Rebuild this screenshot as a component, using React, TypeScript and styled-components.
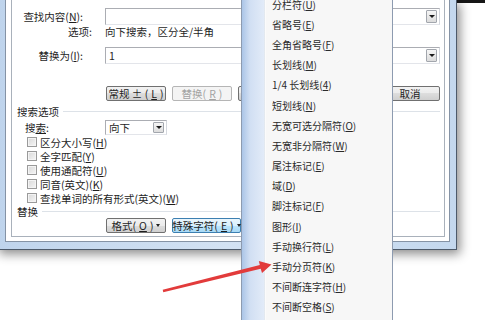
import styled, { createGlobalStyle } from 'styled-components'

const GlobalStyle = createGlobalStyle`
  html, body {
    margin: 0;
    padding: 0;
    background: #fff;
  }
  body {
    font-family: 'Noto Sans CJK SC', 'Noto Sans', sans-serif;
    color: #1e1e1e;
  }
`

const Stage = styled.div`
  position: relative;
  width: 496px;
  height: 320px;
  overflow: hidden;
  background: #fff;
`

const TopStrip = styled.div`
  position: absolute;
  left: 455px;
  top: 0;
  width: 30px;
  height: 3px;
  background: #161616;
`

// dialog window, frame only partly visible
const Window = styled.div`
  position: absolute;
  left: -4px;
  top: 0;
  width: 461px;
  height: 250px;
  box-sizing: border-box;
  display: flex;
  padding: 0 8px 7px;
  border: 1px solid #4d5a6a;
  border-top: none;
  background: linear-gradient(90deg, #bfd4ec, #d3e2f3 50%, #c4d8ee);
  box-shadow: 3px 4px 10px rgba(0, 0, 0, 0.45);
`

const Client = styled.div`
  flex: 1;
  display: flex;
  padding: 0 4px 4px 5px;
  border: 1px solid #8593a5;
  border-top: none;
  background: #fff;
`

const TabPage = styled.div`
  flex: 1;
  display: flex;
  flex-direction: column;
  padding: 0 4px 0 0;
  border: 1px solid #a9b1bb;
  border-top: none;
  font-size: 10.5px;
  line-height: 13px;
`

const FieldRow = styled.div<{ $top: number; $h: number }>`
  display: flex;
  align-items: center;
  height: ${(p) => p.$h}px;
  margin-top: ${(p) => p.$top}px;
`

const Label = styled.div<{ $end: number }>`
  width: ${(p) => p.$end}px;
  flex: none;
  text-align: right;
  white-space: nowrap;
  margin-right: ${(p) => 93 - p.$end}px;
`

const Combo = styled.div<{ $w?: number }>`
  position: relative;
  box-sizing: border-box;
  height: 100%;
  width: ${(p) => (p.$w ? `${p.$w}px` : 'auto')};
  flex: ${(p) => (p.$w ? 'none' : '1')};
  display: flex;
  align-items: center;
  padding-left: 3px;
  border: 1px solid #abadb3;
  border-right-color: #d5d8de;
  border-bottom-color: #e3e5ea;
  background: #fff;
`

const DropBtn = styled.div`
  position: absolute;
  right: 2px;
  top: 1px;
  bottom: 1px;
  width: 11px;
  box-sizing: border-box;
  border: 1px solid #a2a6ad;
  border-radius: 1px;
  background: linear-gradient(#f6f6f6, #dcdcdc);
  display: flex;
  align-items: center;
  justify-content: center;
  &::after {
    content: '';
    border-left: 3px solid transparent;
    border-right: 3px solid transparent;
    border-top: 3px solid #1a1a1a;
  }
`

const ButtonRow = styled.div<{ $top: number }>`
  display: flex;
  gap: 6px;
  height: 15px;
  margin-top: ${(p) => p.$top}px;
  padding-left: 94px;
`

const Btn = styled.div<{ $w?: number; $state?: 'off' | 'hot'; $push?: boolean }>`
  box-sizing: border-box;
  width: ${(p) => p.$w ?? 60}px;
  height: 15px;
  display: flex;
  align-items: center;
  justify-content: center;
  gap: 3px;
  margin-left: ${(p) => (p.$push ? 'auto' : '0')};
  border: 1px solid ${(p) => (p.$state === 'hot' ? '#3c7fb1' : p.$state === 'off' ? '#b5b5b5' : '#707070')};
  border-radius: 2px;
  white-space: nowrap;
  color: ${(p) => (p.$state === 'off' ? '#a3a3a3' : '#1e1e1e')};
  background: ${(p) =>
    p.$state === 'hot'
      ? 'linear-gradient(#eaf6fd 0, #d9f0fc 50%, #bee6fd 50%, #a7d9f5 100%)'
      : p.$state === 'off'
        ? '#f4f4f4'
        : 'linear-gradient(#f2f2f2 0, #ebebeb 50%, #dddddd 50%, #cfcfcf 100%)'};
`

const Caret = styled.span`
  border-left: 2.5px solid transparent;
  border-right: 2.5px solid transparent;
  border-top: 3px solid #222;
`

const GroupHead = styled.div<{ $top: number }>`
  display: flex;
  align-items: center;
  height: 13px;
  margin-top: ${(p) => p.$top}px;
  padding-left: 5px;
  &::after {
    content: '';
    flex: 1;
    margin-left: 4px;
    border-top: 1px solid #dde2e8;
  }
`

const CheckRow = styled.label`
  display: flex;
  align-items: center;
  gap: 3px;
  height: 14px;
  padding-left: 15px;
  white-space: nowrap;
`

const Box = styled.span`
  width: 10px;
  height: 10px;
  box-sizing: border-box;
  border: 1px solid #9a9a9a;
  background: linear-gradient(135deg, #d8d8d8, #f6f6f6);
  box-shadow: inset 0 0 0 1px #f4f4f4;
`

const SearchLabel = styled.div`
  width: 80px;
  padding-left: 13px;
  box-sizing: border-box;
  flex: none;
  margin-right: 13px;
`

// popup menu
const Menu = styled.div`
  position: absolute;
  left: 241px;
  top: -7px;
  width: 152px;
  height: 340px;
  box-sizing: border-box;
  border: 1px solid #8d9bb0;
  background: linear-gradient(
    90deg,
    #abc5e7 0,
    #d1dff3 8px,
    #e2ebf8 22px,
    #c6d2e0 22px,
    #ffffff 23px,
    #f7f7f7 24px
  );
  font-size: 10px;
  color: #2a2a2a;
`

const Item = styled.div`
  height: 20.2px;
  display: flex;
  align-items: center;
  padding-left: 30px;
  white-space: nowrap;
`

const Arrow = styled.svg`
  position: absolute;
  left: 0;
  top: 0;
`

const items: [string, string][] = [
  ['分栏符', 'U'],
  ['省略号', 'E'],
  ['全角省略号', 'F'],
  ['长划线', 'M'],
  ['1/4 长划线', '4'],
  ['短划线', 'N'],
  ['无宽可选分隔符', 'O'],
  ['无宽非分隔符', 'W'],
  ['尾注标记', 'E'],
  ['域', 'D'],
  ['脚注标记', 'F'],
  ['图形', 'I'],
  ['手动换行符', 'L'],
  ['手动分页符', 'K'],
  ['不间断连字符', 'H'],
  ['不间断空格', 'S'],
]

const checks: [string, string][] = [
  ['区分大小写', 'H'],
  ['全字匹配', 'Y'],
  ['使用通配符', 'U'],
  ['同音(英文)', 'K'],
  ['查找单词的所有形式(英文)', 'W'],
]

export default function App() {
  return (
    <Stage>
      <GlobalStyle />
      <TopStrip />
      <Window>
        <Client>
          <TabPage>
            <FieldRow $top={8} $h={17}>
              <Label $end={71}>
                查找内容(<u>N</u>):
              </Label>
              <Combo>
                <DropBtn />
              </Combo>
            </FieldRow>
            <FieldRow $top={0} $h={13}>
              <Label $end={80}>选项:</Label>
              <span>向下搜索，区分全/半角</span>
            </FieldRow>
            <FieldRow $top={9} $h={17}>
              <Label $end={71}>
                替换为(<u>I</u>):
              </Label>
              <Combo>
                1
                <DropBtn />
              </Combo>
            </FieldRow>
            <ButtonRow $top={22}>
              <Btn>
                常规 ± (<u>L</u>)
              </Btn>
              <Btn $state="off">
                替换(<u>R</u>)
              </Btn>
              {/* these two sit under the popup menu */}
              <Btn />
              <Btn $w={70} />
              <Btn $push>取消</Btn>
            </ButtonRow>
            <GroupHead $top={4}>搜索选项</GroupHead>
            <FieldRow $top={2} $h={15}>
              <SearchLabel>
                搜<u>索</u>:
              </SearchLabel>
              <Combo $w={62}>
                向下
                <DropBtn />
              </Combo>
            </FieldRow>
            {checks.map(([t, k]) => (
              <CheckRow key={t}>
                <Box />
                <span>
                  {t}(<u>{k}</u>)
                </span>
              </CheckRow>
            ))}
            <GroupHead $top={0}>替换</GroupHead>
            <ButtonRow $top={0}>
              <Btn>
                格式(<u>O</u>) <Caret />
              </Btn>
              <Btn $w={69} $state="hot">
                特殊字符(<u>E</u>)<Caret />
              </Btn>
            </ButtonRow>
          </TabPage>
        </Client>
      </Window>
      <Menu>
        {items.map(([t, k], i) => (
          <Item key={i}>
            {t}(<u>{k}</u>)
          </Item>
        ))}
      </Menu>
      <Arrow width="496" height="320" viewBox="0 0 496 320">
        <polygon
          points="163.3,292.2 162.7,289.8 259.8,264.9 258.8,260.9 271.5,264.6 262,273 260.7,268.7"
          fill="#e23b3b"
        />
      </Arrow>
    </Stage>
  )
}
